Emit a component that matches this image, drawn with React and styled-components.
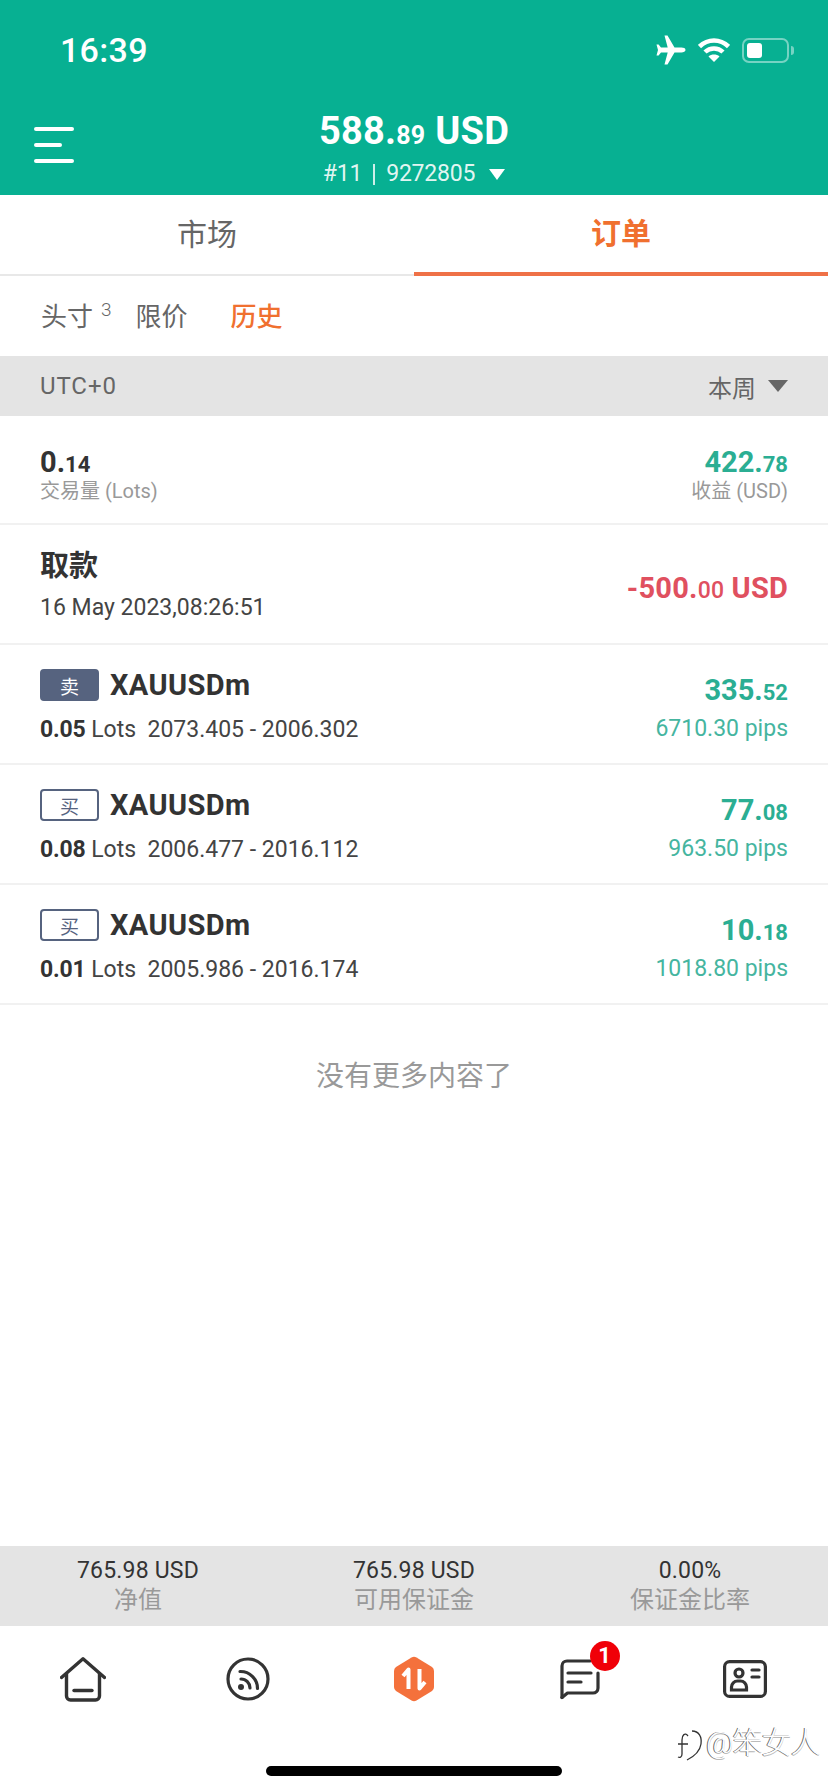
import React from "react";
import styled, { createGlobalStyle } from "styled-components";

const Global = createGlobalStyle`
  html, body { margin: 0; padding: 0; background: #fff; }
  * { box-sizing: border-box; }
  body { font-family: Roboto, "Noto Sans CJK SC", sans-serif; }
`;

const Page = styled.div`
  position: relative;
  width: 828px;
  height: 1792px;
  display: flex;
  flex-direction: column;
  background: #fff;
  color: #333;
  overflow: hidden;
`;

const Header = styled.header`
  height: 195px;
  background: #07b092;
  color: #fff;
  display: flex;
  flex-direction: column;
`;
const StatusBar = styled.div`
  height: 100px;
  display: flex;
  align-items: center;
  justify-content: space-between;
  padding: 0 34px 0 60px;
`;
const Clock = styled.span`
  font-size: 34px;
  font-weight: 500;
  letter-spacing: 0.3px;
`;
const StatusIcons = styled.div`
  display: flex;
  align-items: center;
`;
const Battery = styled.div`
  width: 47px;
  height: 25px;
  margin-left: 12px;
  padding: 3px;
  border: 2px solid rgba(255, 255, 255, 0.45);
  border-radius: 7px;
  display: flex;
  &::before {
    content: "";
    width: 15px;
    background: #fff;
    border-radius: 3px;
  }
`;
const BatteryTip = styled.div`
  width: 3px;
  height: 9px;
  margin-left: 2px;
  background: rgba(255, 255, 255, 0.45);
  border-radius: 0 3px 3px 0;
`;
const TitleBar = styled.div`
  flex: 1;
  display: grid;
  grid-template-columns: 1fr auto 1fr;
  align-items: start;
`;
const Burger = styled.div`
  padding: 27px 0 0 34px;
  display: flex;
  flex-direction: column;
  align-items: flex-start;
  gap: 12px;
`;
const BurgerLine = styled.span`
  display: block;
  width: ${(p) => p.$w}px;
  height: 4px;
  border-radius: 2px;
  background: #fff;
`;
const Account = styled.div`
  display: flex;
  flex-direction: column;
  align-items: center;
`;
const Balance = styled.div`
  height: 56px;
  line-height: 56px;
  margin-top: 3px;
  font-size: 38px;
  font-weight: 700;
  letter-spacing: 0.2px;
  white-space: nowrap;
`;
const BalanceCents = styled.span`
  font-size: 25px;
  margin-right: 10px;
`;
const AccountNo = styled.div`
  height: 30px;
  line-height: 30px;
  display: flex;
  align-items: center;
  font-size: 23px;
  letter-spacing: -0.2px;
  color: rgba(255, 255, 255, 0.9);
  white-space: nowrap;
`;
const Divider = styled.span`
  width: 2px;
  height: 21px;
  margin: 0 11px;
  background: rgba(255, 255, 255, 0.8);
`;
const Triangle = styled.span`
  width: 0;
  height: 0;
  margin-left: ${(p) => p.$ml}px;
  border-left: ${(p) => p.$w}px solid transparent;
  border-right: ${(p) => p.$w}px solid transparent;
  border-top: ${(p) => p.$h}px solid ${(p) => p.$c};
`;

const Tabs = styled.nav`
  height: 81px;
  display: grid;
  grid-template-columns: 1fr 1fr;
`;
const Tab = styled.div`
  display: flex;
  align-items: center;
  justify-content: center;
  padding-bottom: 5px;
  font-size: 30px;
  font-weight: ${(p) => (p.$active ? 700 : 400)};
  color: ${(p) => (p.$active ? "#f0702f" : "#666")};
  border-bottom: ${(p) => (p.$active ? "4px solid #ef7147" : "2px solid #e8e8e8")};
`;
const SubTabs = styled.div`
  height: 80px;
  padding: 0 41px 4px;
  display: flex;
  align-items: center;
  font-size: 26px;
  color: #666;
`;
const SubTab = styled.span`
  margin-left: ${(p) => p.$ml || 0}px;
  color: ${(p) => (p.$active ? "#f0702f" : "#666")};
  font-weight: ${(p) => (p.$active ? 500 : 400)};
`;
const Sup = styled.sup`
  font-size: 19px;
  font-weight: 300;
  line-height: 0;
  margin-left: 8px;
  vertical-align: 10px;
`;
const FilterBar = styled.div`
  height: 60px;
  background: #e4e4e4;
  padding: 0 40px 0 40px;
  display: flex;
  align-items: center;
  justify-content: space-between;
  font-size: 24px;
  color: #666;
`;
const FilterLabel = styled.span`
  letter-spacing: 0.9px;
`;
const FilterRight = styled.div`
  display: flex;
  align-items: center;
`;

const Main = styled.main`
  flex: 1;
  display: flex;
  flex-direction: column;
`;
const Row = styled.div`
  height: ${(p) => p.$h}px;
  padding: ${(p) => p.$pt}px 40px 0;
  border-bottom: 2px solid #f1f1f1;
  display: flex;
  justify-content: space-between;
  align-items: flex-start;
`;
const Stack = styled.div`
  display: flex;
  flex-direction: column;
  align-items: ${(p) => (p.$right ? "flex-end" : "flex-start")};
`;
const Num = styled.div`
  height: ${(p) => p.$lh}px;
  line-height: ${(p) => p.$lh}px;
  font-size: 29px;
  font-weight: 700;
  color: ${(p) => p.$c || "#333"};
  white-space: nowrap;
`;
const Cents = styled.span`
  font-size: ${(p) => p.$s || 22}px;
  font-weight: ${(p) => p.$w || 700};
`;
const Caption = styled.div`
  height: 26px;
  line-height: 26px;
  font-size: 20px;
  color: #999;
  white-space: nowrap;
`;
const EventTitle = styled.div`
  height: 40px;
  line-height: 40px;
  margin-top: 2px;
  font-size: 29px;
  font-weight: 700;
  color: #333;
`;
const EventDate = styled.div`
  height: 32px;
  line-height: 32px;
  margin-top: 6px;
  font-size: 23px;
  letter-spacing: 0;
  color: #444;
`;
const Amount = styled(Num)`
  margin-top: 24px;
  color: #e0505f;
  letter-spacing: 0.2px;
`;
const SymbolLine = styled.div`
  height: 32px;
  display: flex;
  align-items: center;
  gap: 11px;
`;
const Side = styled.span`
  width: 59px;
  height: 32px;
  display: flex;
  align-items: center;
  justify-content: center;
  border-radius: 4px;
  font-size: 19px;
  background: ${(p) => (p.$sell ? "#56637f" : "#fff")};
  color: ${(p) => (p.$sell ? "#fff" : "#56637f")};
  border: 2px solid #56637f;
`;
const Symbol = styled.span`
  font-size: 29px;
  font-weight: 700;
  color: #333;
  letter-spacing: 0.4px;
`;
const DetailLine = styled.div`
  height: 32px;
  line-height: 32px;
  margin-top: 13px;
  font-size: 23px;
  color: #444;
  white-space: pre;
`;
const Lots = styled.b`
  font-weight: 700;
  color: #333;
  letter-spacing: -0.2px;
`;
const Profit = styled(Num)`
  margin-bottom: 2px;
`;
const Pips = styled.div`
  height: 32px;
  line-height: 32px;
  font-size: 23px;
  color: #45b59f;
  white-space: nowrap;
`;
const EndNote = styled.div`
  margin-top: 52px;
  text-align: center;
  font-size: 28px;
  line-height: 40px;
  color: #999;
`;

const Stats = styled.div`
  height: 80px;
  background: #e4e4e4;
  display: grid;
  grid-template-columns: repeat(3, 1fr);
  padding-top: 11px;
`;
const Stat = styled.div`
  text-align: center;
`;
const StatValue = styled.div`
  height: 28px;
  line-height: 28px;
  font-size: 23px;
  color: #333;
  letter-spacing: 0.2px;
`;
const StatLabel = styled.div`
  height: 30px;
  line-height: 30px;
  font-size: 24px;
  color: #999;
`;
const NavBar = styled.div`
  height: 106px;
  display: grid;
  grid-template-columns: repeat(5, 1fr);
`;
const NavItem = styled.div`
  display: flex;
  align-items: center;
  justify-content: center;
`;
const IconWrap = styled.div`
  position: relative;
  display: flex;
`;
const Badge = styled.span`
  position: absolute;
  left: 30px;
  top: -18px;
  width: 30px;
  height: 30px;
  border-radius: 50%;
  background: #f00008;
  color: #fff;
  font-size: 22px;
  font-weight: 700;
  line-height: 30px;
  text-align: center;
`;
const HomeBar = styled.div`
  margin: 34px auto 16px;
  width: 296px;
  height: 10px;
  border-radius: 5px;
  background: #000;
`;
const Watermark = styled.div`
  position: absolute;
  left: 677px;
  top: 1727px;
  display: flex;
  align-items: flex-start;
  gap: 3px;
  height: 38px;
  line-height: 32px;
  font-size: 30px;
  font-weight: 300;
  letter-spacing: -1px;
  color: #fff;
  text-shadow: -1px 0 0 #666, 0 1px 0 #bbb;
  white-space: nowrap;
`;

const Plane = () => (
  <svg width="30" height="30" viewBox="0 0 30 30" fill="#fff">
    <path d="M29.5 15c0-1.6-2-2.4-4-2.4h-7L11.5.5H8.5l3.2 12.1H5L2.6 9.5H.5L2 15 .5 20.5h2.1L5 17.4h6.7L8.5 29.5h3l7-12.1h7c2 0 4-.8 4-2.4z" />
  </svg>
);
const Wifi = () => (
  <svg width="32" height="24" viewBox="0 0 32 24" fill="none" style={{ marginLeft: 12 }}>
    <path d="M1.5 8.5C10 .5 22 .5 30.500 8.500" stroke="#fff" strokeWidth="4.500" />
    <path d="M7 14c5-4.800 13-4.800 18 0" stroke="#fff" strokeWidth="4.500" />
    <path d="M10.500 18.500c3-2.600 8-2.600 11 0L16 24z" fill="#fff" />
  </svg>
);
const Home = () => (
  <svg width="46" height="45" viewBox="0 0 46 45" fill="none" stroke="#333" strokeWidth="3.4" strokeLinecap="round" strokeLinejoin="round">
    <path d="M1.5 20.5L23 1.8l21.500 18.700" />
    <path d="M6.500 17v22a4 4 0 0 0 4 4h25a4 4 0 0 0 4-4V17" />
    <path d="M14 33.500h18" />
  </svg>
);
const Feed = () => (
  <svg width="44" height="44" viewBox="0 0 44 44" fill="none" stroke="#333" strokeWidth="3.200" strokeLinecap="round">
    <circle cx="22" cy="22" r="20" />
    <path d="M15 22a9 9 0 0 1 9 9" />
    <path d="M14 14.500a17 17 0 0 1 17.500 17" />
    <circle cx="15" cy="30" r="3" fill="#333" stroke="none" />
  </svg>
);
const Exchange = () => (
  <svg width="40" height="46" viewBox="0 0 40 46">
    <path d="M17.500 1.500q2.500-1.500 5 0L38 11q2 1.300 2 4v16q0 2.700-2 4L22.500 44.500q-2.500 1.500-5 0L2 35q-2-1.300-2-4V15q0-2.700 2-4z" fill="#f4713c" />
    <path d="M14.500 33V13.500L9 20M25.500 13v19.500L31 26" fill="none" stroke="#fff" strokeWidth="4" strokeLinejoin="round" />
  </svg>
);
const Chat = () => (
  <svg width="40" height="41" viewBox="0 0 40 41" fill="none" stroke="#333" strokeWidth="3.200" strokeLinecap="round" strokeLinejoin="round">
    <path d="M2 38.500V7a5 5 0 0 1 5-5h23" />
    <path d="M38 14v15a5 5 0 0 1-5 5H7.500L2 38.500" />
    <path d="M8 14h23M8 23h13" />
  </svg>
);
const Card = () => (
  <svg width="44" height="38" viewBox="0 0 44 38" fill="none" stroke="#333" strokeWidth="3.200" strokeLinecap="round">
    <rect x="1.600" y="1.600" width="40.800" height="34.800" rx="5" />
    <circle cx="16" cy="13" r="4" />
    <path d="M8.500 30v-3a6 6 0 0 1 6-6h3a6 6 0 0 1 6 6v3z" />
    <path d="M29 10h7M29 17h7" />
  </svg>
);
const WatermarkLogo = () => (
  <svg width="26" height="36" viewBox="0 0 26 36" fill="none" stroke="#333" strokeWidth="1.300">
    <path d="M11 9C8 5 5 8 5 13v14c0 3-2 4-4 3M1 17h10" />
    <path d="M15 4c7 0 10 6 9 13s-6 12-14 16" />
  </svg>
);

const trades = [
  { sell: true, side: "卖", lots: "0.05", range: "2073.405 - 2006.302", big: "335.", small: "52", pips: "6710.30 pips" },
  { sell: false, side: "买", lots: "0.08", range: "2006.477 - 2016.112", big: "77.", small: "08", pips: "963.50 pips" },
  { sell: false, side: "买", lots: "0.01", range: "2005.986 - 2016.174", big: "10.", small: "18", pips: "1018.80 pips" },
];
const stats = [
  { value: "765.98 USD", label: "净值" },
  { value: "765.98 USD", label: "可用保证金" },
  { value: "0.00%", label: "保证金比率" },
];

export default function App() {
  return (
    <Page>
      <Global />
      <Header>
        <StatusBar>
          <Clock>16:39</Clock>
          <StatusIcons>
            <Plane />
            <Wifi />
            <Battery />
            <BatteryTip />
          </StatusIcons>
        </StatusBar>
        <TitleBar>
          <Burger>
            <BurgerLine $w={40} />
            <BurgerLine $w={28} />
            <BurgerLine $w={40} />
          </Burger>
          <Account>
            <Balance>
              588.<BalanceCents>89</BalanceCents>USD
            </Balance>
            <AccountNo>
              #11
              <Divider />
              9272805
              <Triangle $ml={14} $w={8} $h={11} $c="#fff" />
            </AccountNo>
          </Account>
        </TitleBar>
      </Header>
      <Tabs>
        <Tab>市场</Tab>
        <Tab $active>订单</Tab>
      </Tabs>
      <SubTabs>
        <SubTab>
          头寸<Sup>3</Sup>
        </SubTab>
        <SubTab $ml={24}>限价</SubTab>
        <SubTab $ml={43} $active>历史</SubTab>
      </SubTabs>
      <FilterBar>
        <FilterLabel>UTC+0</FilterLabel>
        <FilterRight>
          本周
          <Triangle $ml={12} $w={10} $h={12} $c="#666" />
        </FilterRight>
      </FilterBar>
      <Main>
        <Row $h={109} $pt={30}>
          <Stack>
            <Num $lh={32}>
              0.<Cents>14</Cents>
            </Num>
            <Caption>交易量 (Lots)</Caption>
          </Stack>
          <Stack $right>
            <Num $lh={32} $c="#2bae93">
              422.<Cents>78</Cents>
            </Num>
            <Caption>收益 (USD)</Caption>
          </Stack>
        </Row>
        <Row $h={120} $pt={19}>
          <Stack>
            <EventTitle>取款</EventTitle>
            <EventDate>16 May 2023,08:26:51</EventDate>
          </Stack>
          <Amount $lh={40}>
            -500.<Cents $s={23} $w={500}>00</Cents> USD
          </Amount>
        </Row>
        {trades.map((t) => (
          <Row key={t.range} $h={120} $pt={24}>
            <Stack>
              <SymbolLine>
                <Side $sell={t.sell}>{t.side}</Side>
                <Symbol>XAUUSDm</Symbol>
              </SymbolLine>
              <DetailLine>
                <Lots>{t.lots}</Lots> Lots  {t.range}
              </DetailLine>
            </Stack>
            <Stack $right>
              <Profit $lh={42} $c="#2bae93">
                {t.big}<Cents>{t.small}</Cents>
              </Profit>
              <Pips>{t.pips}</Pips>
            </Stack>
          </Row>
        ))}
        <EndNote>没有更多内容了</EndNote>
      </Main>
      <Stats>
        {stats.map((s) => (
          <Stat key={s.label}>
            <StatValue>{s.value}</StatValue>
            <StatLabel>{s.label}</StatLabel>
          </Stat>
        ))}
      </Stats>
      <NavBar>
        <NavItem><Home /></NavItem>
        <NavItem><Feed /></NavItem>
        <NavItem><Exchange /></NavItem>
        <NavItem>
          <IconWrap>
            <Chat />
            <Badge>1</Badge>
          </IconWrap>
        </NavItem>
        <NavItem><Card /></NavItem>
      </NavBar>
      <HomeBar />
      <Watermark>
        <WatermarkLogo />
        @笨女人
      </Watermark>
    </Page>
  );
}
